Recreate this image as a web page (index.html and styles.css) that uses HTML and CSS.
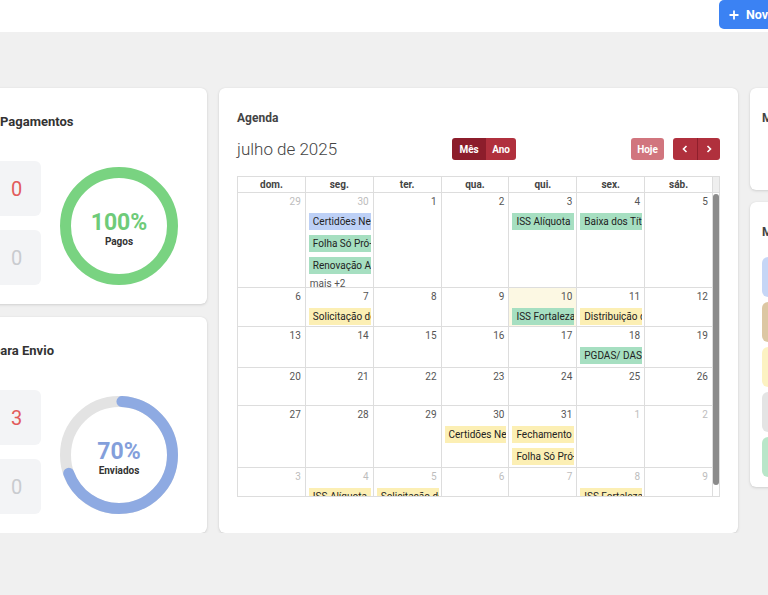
FILE: index.html
```html
<!DOCTYPE html>
<html lang="pt-BR">
<head>
<meta charset="utf-8">
<title>Dashboard</title>
<link rel="stylesheet" href="styles.css">
</head>
<body>
<div class="page">
  <header class="topbar">
    <button class="btn-new">
      <svg class="plus" viewBox="0 0 10 10" width="10" height="10"><path d="M5 0.5V9.5M0.5 5H9.5" stroke="#fff" stroke-width="1.8" fill="none"/></svg>
      <span>Novo Evento</span>
    </button>
  </header>

  <main class="dash">
    <div class="col-left">
      <section class="card stat-card">
        <h2 class="card-title">Pagamentos</h2>
        <div class="stat-body">
          <div class="stat-boxes">
            <div class="stat-box red">0</div>
            <div class="stat-box muted">0</div>
          </div>
          <div class="donut">
            <svg class="ring" viewBox="0 0 118 118" width="118" height="118">
              <circle cx="59" cy="59" r="53.5" fill="none" stroke="#79d381" stroke-width="11"/>
            </svg>
            <div class="donut-label">
              <span class="pct green">100%</span>
              <span class="pct-sub">Pagos</span>
            </div>
          </div>
        </div>
      </section>

      <section class="card stat-card">
        <h2 class="card-title title-cut">para Envio</h2>
        <div class="stat-body">
          <div class="stat-boxes">
            <div class="stat-box red">3</div>
            <div class="stat-box muted">0</div>
          </div>
          <div class="donut">
            <svg class="ring" viewBox="0 0 118 118" width="118" height="118">
              <circle cx="59" cy="59" r="53.5" fill="none" stroke="#e3e3e3" stroke-width="11"/>
              <circle cx="59" cy="59" r="53.5" fill="none" stroke="#8eaae2" stroke-width="11" stroke-linecap="round" stroke-dasharray="230 400" stroke-dashoffset="-3" transform="rotate(-90 59 59)"/>
            </svg>
            <div class="donut-label">
              <span class="pct blue">70%</span>
              <span class="pct-sub">Enviados</span>
            </div>
          </div>
        </div>
      </section>
    </div>

    <section class="card cal-card">
      <h2 class="cal-title">Agenda</h2>
      <div class="cal-toolbar">
        <div class="cal-month">julho de 2025</div>
        <div class="btn-group">
          <button class="btn btn-active w-mes">Mês</button>
          <button class="btn w-ano">Ano</button>
        </div>
        <div class="tool-right">
          <button class="btn btn-dim w-hoje">Hoje</button>
          <div class="btn-group">
            <button class="btn w-arrow"><svg viewBox="0 0 6 8" width="6" height="8"><path d="M4.5 1L1.5 4L4.5 7" stroke="#fff" stroke-width="1.6" fill="none"/></svg></button>
            <button class="btn w-arrow sep"><svg viewBox="0 0 6 8" width="6" height="8"><path d="M1.5 1L4.5 4L1.5 7" stroke="#fff" stroke-width="1.6" fill="none"/></svg></button>
          </div>
        </div>
      </div>

      <div class="cal-table">
        <div class="cal-head">
          <div class="hcell">dom.</div>
          <div class="hcell">seg.</div>
          <div class="hcell">ter.</div>
          <div class="hcell">qua.</div>
          <div class="hcell">qui.</div>
          <div class="hcell">sex.</div>
          <div class="hcell">sáb.</div>
          <div class="hgutter"></div>
        </div>
        <div class="cal-body">
          <div class="cal-scroll">
            <div class="cal-row r1">
              <div class="cell other"><div class="day-num">29</div></div>
              <div class="cell other"><div class="day-num">30</div>
                <div class="evs">
                  <div class="ev ev-blue">Certidões Negativas</div>
                  <div class="ev ev-green">Folha Só Pró-labore</div>
                  <div class="ev ev-green">Renovação Alvará</div>
                  <div class="more">mais +2</div>
                </div>
              </div>
              <div class="cell"><div class="day-num">1</div></div>
              <div class="cell"><div class="day-num">2</div></div>
              <div class="cell"><div class="day-num">3</div>
                <div class="evs"><div class="ev ev-green">ISS Alíquota</div></div>
              </div>
              <div class="cell"><div class="day-num">4</div>
                <div class="evs"><div class="ev ev-green">Baixa dos Títulos</div></div>
              </div>
              <div class="cell"><div class="day-num">5</div></div>
            </div>

            <div class="cal-row r2">
              <div class="cell"><div class="day-num">6</div></div>
              <div class="cell"><div class="day-num">7</div>
                <div class="evs"><div class="ev ev-yellow">Solicitação de Notas</div></div>
              </div>
              <div class="cell"><div class="day-num">8</div></div>
              <div class="cell"><div class="day-num">9</div></div>
              <div class="cell today"><div class="day-num">10</div>
                <div class="evs"><div class="ev ev-green">ISS Fortaleza</div></div>
              </div>
              <div class="cell"><div class="day-num">11</div>
                <div class="evs"><div class="ev ev-yellow">Distribuição de Lucros</div></div>
              </div>
              <div class="cell"><div class="day-num">12</div></div>
            </div>

            <div class="cal-row r3">
              <div class="cell"><div class="day-num">13</div></div>
              <div class="cell"><div class="day-num">14</div></div>
              <div class="cell"><div class="day-num">15</div></div>
              <div class="cell"><div class="day-num">16</div></div>
              <div class="cell"><div class="day-num">17</div></div>
              <div class="cell"><div class="day-num">18</div>
                <div class="evs"><div class="ev ev-green">PGDAS/ DAS</div></div>
              </div>
              <div class="cell"><div class="day-num">19</div></div>
            </div>

            <div class="cal-row r4">
              <div class="cell"><div class="day-num">20</div></div>
              <div class="cell"><div class="day-num">21</div></div>
              <div class="cell"><div class="day-num">22</div></div>
              <div class="cell"><div class="day-num">23</div></div>
              <div class="cell"><div class="day-num">24</div></div>
              <div class="cell"><div class="day-num">25</div></div>
              <div class="cell"><div class="day-num">26</div></div>
            </div>

            <div class="cal-row r5">
              <div class="cell"><div class="day-num">27</div></div>
              <div class="cell"><div class="day-num">28</div></div>
              <div class="cell"><div class="day-num">29</div></div>
              <div class="cell"><div class="day-num">30</div>
                <div class="evs"><div class="ev ev-yellow">Certidões Negativas</div></div>
              </div>
              <div class="cell"><div class="day-num">31</div>
                <div class="evs">
                  <div class="ev ev-yellow">Fechamento</div>
                  <div class="ev ev-yellow">Folha Só Pró-labore</div>
                </div>
              </div>
              <div class="cell other"><div class="day-num">1</div></div>
              <div class="cell other"><div class="day-num">2</div></div>
            </div>

            <div class="cal-row r6">
              <div class="cell other"><div class="day-num">3</div></div>
              <div class="cell other"><div class="day-num">4</div>
                <div class="evs"><div class="ev ev-yellow">ISS Alíquota</div></div>
              </div>
              <div class="cell other"><div class="day-num">5</div>
                <div class="evs"><div class="ev ev-yellow">Solicitação de Notas</div></div>
              </div>
              <div class="cell other"><div class="day-num">6</div></div>
              <div class="cell other"><div class="day-num">7</div></div>
              <div class="cell other"><div class="day-num">8</div>
                <div class="evs"><div class="ev ev-yellow">ISS Fortaleza</div></div>
              </div>
              <div class="cell other"><div class="day-num">9</div></div>
            </div>
          </div>
          <div class="cal-bar"><div class="thumb"></div></div>
        </div>
      </div>
    </section>

    <div class="col-right">
      <section class="card side-card side-small">
        <h2 class="cal-title">Meus Lembretes</h2>
      </section>
      <section class="card side-card">
        <h2 class="cal-title side-title">Marcadores</h2>
        <div class="swatches">
          <div class="swatch sw-blue"></div>
          <div class="swatch sw-tan"></div>
          <div class="swatch sw-yellow"></div>
          <div class="swatch sw-gray"></div>
          <div class="swatch sw-green"></div>
        </div>
      </section>
    </div>
  </main>
</div>
</body>
</html>
```

FILE: styles.css
```css
* { box-sizing: border-box; }

body {
  margin: 0;
  background: #f0f0f0;
  font-family: Roboto, "Liberation Sans", Arial, sans-serif;
  overflow: hidden;
}

.page {
  width: 1100px;
  margin-left: -100px;
}

/* top bar */
.topbar {
  height: 32px;
  background: #fff;
  display: flex;
  justify-content: flex-end;
  align-items: flex-start;
  padding-right: 161px;
}

.btn-new {
  width: 120px;
  height: 29px;
  border: 0;
  border-radius: 5px;
  background: #3b82f3;
  color: #fff;
  font-family: inherit;
  font-size: 12.5px;
  font-weight: 700;
  display: flex;
  align-items: center;
  gap: 7px;
  padding: 0 0 0 10px;
}

.plus { display: block; }

/* dashboard grid */
.dash {
  display: grid;
  grid-template-columns: 227px 519px 250px;
  column-gap: 12px;
  padding: 56px 0 0 80px;
}

.card {
  background: #fff;
  border-radius: 6px;
  box-shadow: 0 1px 3px rgba(0, 0, 0, 0.13), 0 0 1px rgba(0, 0, 0, 0.1);
}

.col-left {
  display: flex;
  flex-direction: column;
  gap: 13px;
}

.stat-card {
  height: 216px;
  padding: 25px 29px 19px 20px;
  display: flex;
  flex-direction: column;
}

.card-title {
  margin: 0;
  font-size: 13px;
  line-height: 18px;
  font-weight: 700;
  color: #333;
}

.title-cut { margin-left: -7px; }

.stat-body {
  margin-top: auto;
  display: flex;
  justify-content: space-between;
  align-items: flex-end;
}

.stat-boxes {
  display: flex;
  flex-direction: column;
  gap: 14px;
  margin-left: -8px;
}

.stat-box {
  width: 49px;
  height: 55px;
  border-radius: 6px;
  background: #f3f4f6;
  display: flex;
  align-items: center;
  justify-content: center;
  font-size: 20px;
}

.stat-box.red { color: #e25b5b; }
.stat-box.muted { color: #c9cbcf; }

.donut {
  display: grid;
  width: 118px;
  height: 118px;
}

.donut > * { grid-area: 1 / 1; }

.ring { display: block; }

.donut-label {
  display: flex;
  flex-direction: column;
  align-items: center;
  justify-content: center;
  padding-top: 5px;
}

.pct {
  font-size: 23px;
  line-height: 26px;
  font-weight: 700;
}

.pct.green { color: #6ecb79; }
.pct.blue { color: #849fdb; }

.pct-sub {
  font-size: 10px;
  line-height: 12px;
  font-weight: 700;
  color: #333;
}

/* calendar card */
.cal-card {
  padding: 22px 18px 0 18px;
}

.cal-title {
  margin: 0;
  font-size: 12px;
  line-height: 16px;
  font-weight: 700;
  color: #444;
  white-space: nowrap;
}

.cal-toolbar {
  margin-top: 12px;
  height: 22px;
  display: flex;
  justify-content: space-between;
  align-items: center;
}

.cal-month {
  font-size: 17px;
  font-weight: 300;
  color: #444;
  line-height: 22px;
}

.btn-group { display: flex; }

.btn {
  height: 22px;
  border: 0;
  padding: 0;
  background: #b0303d;
  color: #fff;
  font-family: inherit;
  font-size: 10px;
  font-weight: 700;
  display: flex;
  align-items: center;
  justify-content: center;
}

.btn-group .btn:first-child { border-radius: 3px 0 0 3px; }
.btn-group .btn:last-child { border-radius: 0 3px 3px 0; }

.btn-active { background: #8c1d2b; }
.btn-dim { background: #d1757e; border-radius: 3px; }

.w-mes { width: 34px; }
.w-ano { width: 30px; }
.w-hoje { width: 33px; }
.w-arrow { width: 23.5px; }
.sep { border-left: 1px solid #8f1f2c; }

.tool-right {
  display: flex;
  gap: 9px;
}

/* calendar table */
.cal-table {
  margin-top: 16px;
  border: 1px solid #ddd;
}

.cal-head {
  display: grid;
  grid-template-columns: repeat(7, 1fr) 6px;
  border-bottom: 1px solid #ddd;
}

.hcell {
  height: 15px;
  line-height: 15px;
  text-align: center;
  font-size: 10px;
  font-weight: 700;
  color: #444;
  border-right: 1px solid #ddd;
}

.hgutter { background: #efefef; }

.cal-body {
  display: flex;
  height: 303px;
}

.cal-scroll {
  flex: 1;
  overflow: hidden;
}

.cal-row {
  display: grid;
  grid-template-columns: repeat(7, 1fr);
  border-bottom: 1px solid #ddd;
}

.r1 { height: 95px; }
.r2 { height: 39px; }
.r3 { height: 41px; }
.r4 { height: 38px; }
.r5 { height: 62px; }
.r6 { height: 62px; }

.cell {
  border-right: 1px solid #ddd;
  min-width: 0;
}

.cell.today { background: #fcf8e3; }

.day-num {
  padding: 3px 4px 0 0;
  text-align: right;
  font-size: 10px;
  line-height: 12px;
  color: #555;
}

.other .day-num { color: #bdbdbd; }

.evs {
  margin-top: 5px;
  padding: 0 2px 0 3px;
  display: flex;
  flex-direction: column;
  gap: 5px;
}

.ev {
  height: 17px;
  line-height: 17px;
  padding-left: 4px;
  font-size: 10px;
  color: #222;
  white-space: nowrap;
  overflow: hidden;
}

.ev-blue { background: #bdd0f6; }
.ev-green { background: #a6dfc1; }
.ev-yellow { background: #fcefb4; }

.more {
  font-size: 10px;
  line-height: 10px;
  color: #555;
  padding-left: 1px;
}

.cal-bar {
  width: 6px;
  padding: 1px 0 0 0;
}

.thumb {
  height: 291px;
  border-radius: 3px;
  background: #8b8b8b;
}

/* right column */
.col-right {
  align-self: start;
  display: flex;
  flex-direction: column;
  gap: 12px;
}

.side-card {
  padding: 22px 12px 10px 12px;
}

.side-small { height: 102px; }

.side-title { margin-bottom: 17px; }

.swatches {
  display: flex;
  flex-direction: column;
  gap: 5px;
}

.swatch {
  height: 40px;
  border-radius: 6px;
}

.sw-blue { background: #c6d6f6; }
.sw-tan { background: #dcc7a3; }
.sw-yellow { background: #fcf2c2; }
.sw-gray { background: #e4e4e4; }
.sw-green { background: #b9e6c9; }
```
